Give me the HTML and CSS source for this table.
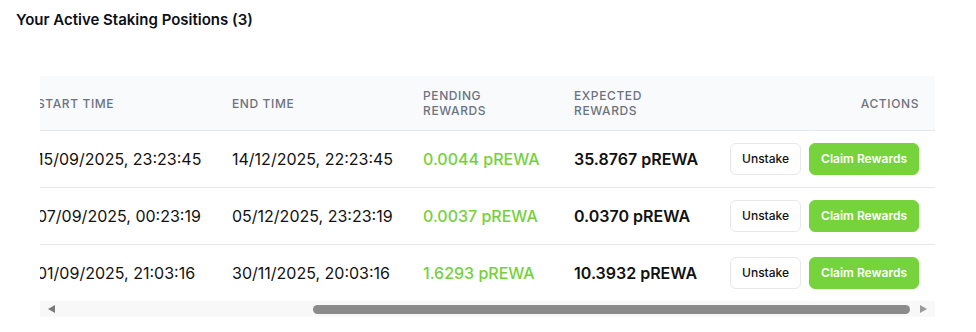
FILE: index.html
```html
<!DOCTYPE html>
<html lang="en">
<head>
<meta charset="utf-8">
<title>Active Staking Positions</title>
<link rel="stylesheet" href="styles.css">
</head>
<body>
<section class="positions">
  <h2 class="title">Your Active Staking Positions (3)</h2>
  <div class="table-wrap">
    <div class="scroller">
      <table class="table">
        <colgroup>
          <col class="c-amount">
          <col class="c-apr">
          <col class="c-start">
          <col class="c-end">
          <col class="c-pending">
          <col class="c-expected">
          <col class="c-actions">
        </colgroup>
        <thead>
          <tr>
            <th>Staked Amount</th>
            <th>Lock Period</th>
            <th>Start Time</th>
            <th>End Time</th>
            <th>Pending<br>Rewards</th>
            <th>Expected<br>Rewards</th>
            <th class="right">Actions</th>
          </tr>
        </thead>
        <tbody>
          <tr>
            <td class="strong">1,000.0000 pREWA</td>
            <td>90 days</td>
            <td>15/09/2025, 23:23:45</td>
            <td>14/12/2025, 22:23:45</td>
            <td class="pending">0.0044 pREWA</td>
            <td class="strong">35.8767 pREWA</td>
            <td class="right">
              <div class="actions"><button class="btn btn-outline">Unstake</button><button class="btn btn-green">Claim Rewards</button></div>
            </td>
          </tr>
          <tr>
            <td class="strong">1.0000 pREWA</td>
            <td>90 days</td>
            <td>07/09/2025, 00:23:19</td>
            <td>05/12/2025, 23:23:19</td>
            <td class="pending">0.0037 pREWA</td>
            <td class="strong">0.0370 pREWA</td>
            <td class="right">
              <div class="actions"><button class="btn btn-outline">Unstake</button><button class="btn btn-green">Claim Rewards</button></div>
            </td>
          </tr>
          <tr>
            <td class="strong">500.0000 pREWA</td>
            <td>90 days</td>
            <td>01/09/2025, 21:03:16</td>
            <td>30/11/2025, 20:03:16</td>
            <td class="pending">1.6293 pREWA</td>
            <td class="strong">10.3932 pREWA</td>
            <td class="right">
              <div class="actions"><button class="btn btn-outline">Unstake</button><button class="btn btn-green">Claim Rewards</button></div>
            </td>
          </tr>
        </tbody>
      </table>
    </div>
    <div class="scrollbar" aria-hidden="true">
      <span class="arrow arrow-left"></span>
      <div class="track"><div class="thumb" style="margin-left:258px;width:597px"></div></div>
      <span class="arrow arrow-right"></span>
    </div>
  </div>
</section>
</body>
</html>
```
FILE: styles.css
```css
* { box-sizing: border-box; }

html, body {
  margin: 0;
  background: #ffffff;
  font-family: Inter, "Noto Sans", "Liberation Sans", sans-serif;
  color: #111111;
}

.positions {
  padding: 8px 41px 0 16px;
}

.title {
  margin: 0 0 44px 0;
  font-size: 15px;
  line-height: 24px;
  font-weight: 600;
  color: #0b0f19;
}

.table-wrap {
  margin-left: 24px;
  display: flex;
  flex-direction: column;
}

.scroller {
  overflow: hidden;
  direction: rtl;
}

.table {
  direction: ltr;
  border-collapse: collapse;
  table-layout: fixed;
  width: 1297px;
}

.c-amount { width: 200px; }
.c-apr { width: 183px; }
.c-start { width: 195px; }
.c-end { width: 191px; }
.c-pending { width: 151px; }
.c-expected { width: 155px; }
.c-actions { width: 222px; }

th {
  background: #f9fafb;
  text-align: left;
  text-transform: uppercase;
  font-size: 12px;
  line-height: 15px;
  font-weight: 500;
  letter-spacing: 0.05em;
  color: #6b7280;
  padding: 12px 16px;
  height: 54px;
  border-bottom: 1px solid #e5e7eb;
  white-space: nowrap;
}

td {
  padding: 12px 16px;
  font-size: 16px;
  line-height: 24px;
  height: 57px;
  color: #111111;
  white-space: nowrap;
  border-bottom: 1px solid #e5e7eb;
}

tbody tr:last-child td { border-bottom: none; height: 56px; }

.right { text-align: right; }

.strong { font-weight: 600; }

.pending {
  color: #74d13a;
  font-weight: 500;
}

.actions {
  display: flex;
  justify-content: flex-end;
  gap: 8px;
}

.btn {
  height: 32px;
  padding: 0 11px;
  border-radius: 6px;
  font-family: inherit;
  font-size: 12px;
  font-weight: 500;
  line-height: 30px;
  cursor: pointer;
}

.btn-outline {
  background: #ffffff;
  border: 1px solid #e5e7eb;
  color: #111111;
}

.btn-green {
  background: #76d33c;
  border: 1px solid #76d33c;
  color: #ffffff;
  font-weight: 600;
}

.scrollbar {
  height: 16px;
  background: #f8f8f8;
  display: flex;
  align-items: center;
}

.arrow {
  width: 0;
  height: 0;
  border-top: 4px solid transparent;
  border-bottom: 4px solid transparent;
  flex: none;
}

.arrow-left {
  margin-left: 8px;
  border-right: 7px solid #7a7a7a;
}

.arrow-right {
  margin-right: 8px;
  border-left: 7px solid #9a9a9a;
}

.track {
  flex: 1;
  display: flex;
  align-items: center;
}

.thumb {
  height: 9px;
  border-radius: 5px;
  background: #8b8b8b;
}
```
